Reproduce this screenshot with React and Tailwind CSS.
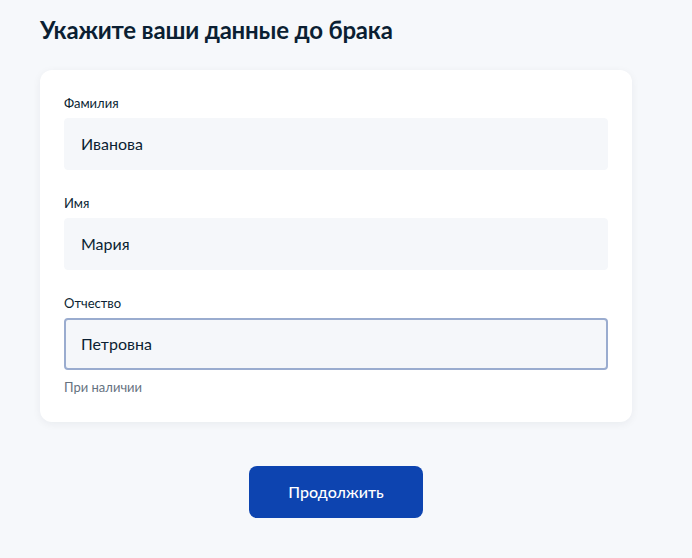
export default function App() {
  const fields = [
    { label: "Фамилия", value: "Иванова" },
    { label: "Имя", value: "Мария" },
  ];
  return (
    <div className="min-h-[558px] w-full bg-[#f6f8fb] px-10 pt-[14px] pb-10 text-[#0b1f33]" style={{ fontFamily: "Lato, 'Noto Sans', sans-serif" }}>
      <h1 className="text-[24px] font-bold leading-[32px] tracking-[-0.2px] text-[#0b1f33]">Укажите ваши данные до брака</h1>
      <div className="mt-6 w-[592px] rounded-xl bg-white px-6 pt-[22px] pb-[26px] shadow-[0_2px_8px_rgba(11,31,51,0.06)]">
        {fields.map((f, i) => (
          <div key={f.label} className={i > 0 ? "mt-[22px]" : ""}>
            <div className="text-[13px] leading-[22px] text-[#0b1f33]">{f.label}</div>
            <div className="mt-[4px] flex h-[52px] items-center rounded-[4px] border border-[#f5f7fa] bg-[#f5f7fa] px-4 text-[16px] text-[#0b1f33]">{f.value}</div>
          </div>
        ))}
        <div className="mt-[22px]">
          <div className="text-[13px] leading-[22px] text-[#0b1f33]">Отчество</div>
          <div className="mt-[4px] flex h-[52px] items-center rounded-[4px] border-2 border-[#9aaccf] bg-[#f5f7fa] px-[15px] text-[16px] text-[#0b1f33]">Петровна</div>
          <div className="mt-[8px] text-[13px] leading-[18px] text-[#66727f]">При наличии</div>
        </div>
      </div>
      <div className="mt-11 flex w-[592px] justify-center">
        <button className="h-[52px] w-[174px] rounded-lg bg-[#0d44b0] text-[16px] font-medium text-white">Продолжить</button>
      </div>
    </div>
  );
}
